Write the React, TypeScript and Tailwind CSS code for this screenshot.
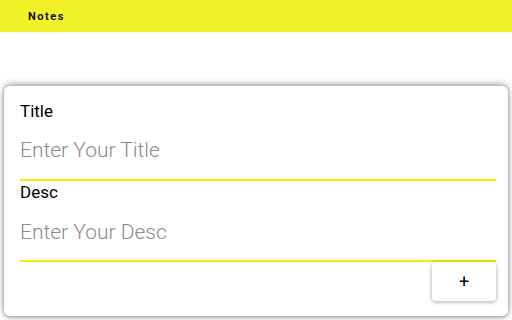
import React from "react";

export default function App() {
  return (
    <div className="w-[512px] h-[320px] bg-white overflow-hidden" style={{ fontFamily: "Roboto, 'Liberation Sans', sans-serif" }}>
      <div className="h-[32px] bg-[#f2f22a] flex items-center pl-[28px] shadow-[0_1px_2px_rgba(0,0,0,0.08)]">
        <span className="text-[11px] font-semibold text-black leading-none tracking-[0.14em]">Notes</span>
      </div>
      <div className="ml-[4px] mr-[4px] mt-[54px] h-[230px] bg-white rounded-[6px] shadow-[0_-2px_6px_rgba(0,0,0,0.35),0_2px_4px_rgba(0,0,0,0.3)] pl-[16px] pr-[12px] pt-[15px] flex flex-col">
        <label className="text-[17px] text-black leading-[20px] h-[20px]">Title</label>
        <input
          className="mt-[17px] leading-[24px] text-[21px] text-[#777] placeholder-[#8a8a8a] outline-none border-b-2 border-[#f0f000] pb-[17px] font-light"
          placeholder="Enter Your Title"
        />
        <label className="mt-[1px] text-[17px] text-black leading-[20px] h-[20px]">Desc</label>
        <input
          className="mt-[18px] leading-[24px] text-[21px] text-[#777] placeholder-[#8a8a8a] outline-none border-b-2 border-[#f0f000] pb-[16px] font-light"
          placeholder="Enter Your Desc"
        />
        <div className="flex justify-end">
          <button className="w-[64px] h-[39px] rounded-[4px] bg-white shadow-[0_1px_4px_rgba(0,0,0,0.35)] text-[18px] leading-none text-black flex items-center justify-center">
            +
          </button>
        </div>
      </div>
    </div>
  );
}
